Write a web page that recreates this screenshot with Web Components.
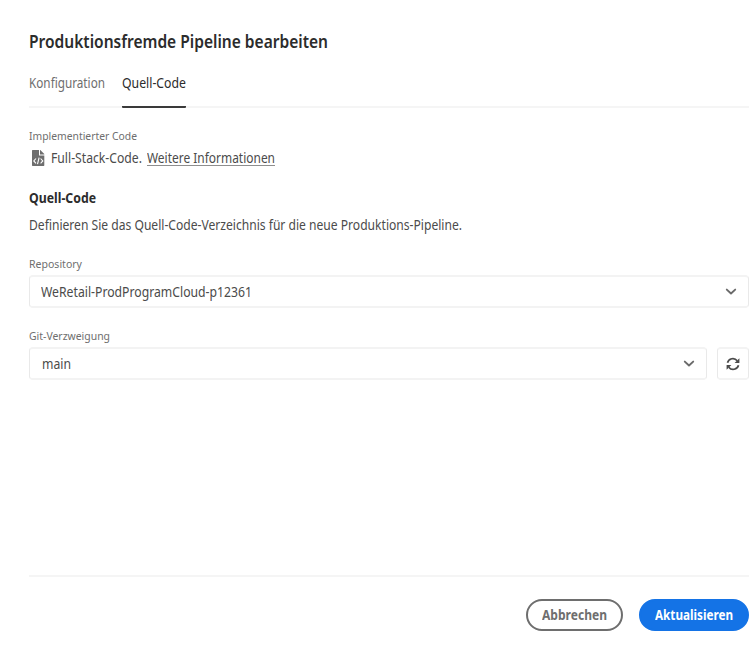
<!DOCTYPE html>
<html lang="de">
<head>
<meta charset="utf-8">
<title>Produktionsfremde Pipeline bearbeiten</title>
<style>
html,body{margin:0;height:100%;background:#fff}
body{font-family:"Noto Sans","Open Sans",sans-serif;font-size:14px;color:#4b4b4b;overflow:hidden}
</style>
</head>
<body>
<pipeline-dialog></pipeline-dialog>
<script>
class BaseElement extends HTMLElement {
  constructor(){ super(); this.attachShadow({mode:"open"}).innerHTML = this.template(); }
}

// A single line of text condensed horizontally to a given width.
customElements.define("fit-text", class extends BaseElement {
  template(){ return `<style>:host{display:block;white-space:nowrap}span{display:inline-block;transform-origin:0 50%}</style><span><slot></slot></span>`; }
  connectedCallback(){
    const w = parseFloat(this.getAttribute("w"));
    this.style.width = w + "px";
    const s = this.shadowRoot.querySelector("span");
    const natural = s.getBoundingClientRect().width;
    s.style.transform = "scaleX(" + (w / natural) + ")";
  }
});

customElements.define("tab-item", class extends BaseElement {
  template(){ return `<style>:host{display:block;box-sizing:border-box;height:39px;line-height:28px;color:#6e6e6e;border-bottom:2px solid transparent}
  :host([selected]){color:#2c2c2c;border-color:#3a3a3a;border-radius:1px}</style><slot></slot>`; }
});
customElements.define("tab-bar", class extends BaseElement {
  template(){ return `<style>:host{display:flex;gap:17px;height:39px;box-shadow:inset 0 -2px #f5f5f5}</style><slot></slot>`; }
});
customElements.define("chevron-icon", class extends BaseElement {
  template(){ return `<style>:host{display:block;width:12px;height:8px}svg{display:block}</style>
  <svg width="12" height="8" viewBox="0 0 12 8" fill="none" stroke="#6a6a6a" stroke-width="1.900" stroke-linecap="round" stroke-linejoin="round"><path d="M1.800 1.600l4.200 3.900 4.200-3.900"/></svg>`; }
});
customElements.define("code-file-icon", class extends BaseElement {
  template(){ return `<style>:host{display:block;width:13px;height:17px}svg{display:block}</style>
  <svg width="13" height="17" viewBox="0 0 13 17"><path fill="#6e6e6e" d="M.5 0H7V5.500h5.300v9.800a.6.6 0 0 1-.6.6H.6a.6.6 0 0 1-.6-.6V.5zM8 0h.3L12.300 4.100V4.500H8z"/>
  <path fill="none" stroke="#fff" stroke-width="1.100" d="M4 8.500L1.800 10.900l2.200 2.400M8.600 8.500L10.800 10.900l-2.200 2.400M7.100 7.700L5.500 14.100"/></svg>`; }
});
customElements.define("refresh-icon", class extends BaseElement {
  template(){ return `<style>:host{display:block;width:14px;height:14px}svg{display:block}</style>
  <svg width="14" height="14" viewBox="0 0 14 14"><path d="M1.500 5.800A5.500 5.500 0 0 1 11.200 3.800M12.500 8.200A5.500 5.500 0 0 1 2.800 10.200" fill="none" stroke="#4b4b4b" stroke-width="1.700"/>
  <path d="M13.400 1.200V6H8.600zM.6 12.800V8h4.800z" fill="#4b4b4b"/></svg>`; }
});
customElements.define("field-label", class extends BaseElement {
  template(){ return `<style>:host{display:block;height:16px;line-height:16px;font-size:11.5px;color:#6e6e6e}</style><slot></slot>`; }
});
customElements.define("select-box", class extends BaseElement {
  template(){ return `<style>:host{display:flex;align-items:center;justify-content:space-between;flex:1;box-sizing:border-box;height:33px;padding:0 11px;border:solid #f3f3f3;border-width:2px 1px;border-left-color:#e9e9e9;border-right-color:#e9e9e9;border-radius:4px;color:#4b4b4b}</style><slot></slot><chevron-icon></chevron-icon>`; }
});
customElements.define("icon-button", class extends BaseElement {
  template(){ return `<style>:host{display:flex;align-items:center;justify-content:center;box-sizing:border-box;width:32px;height:33px;border:solid #f3f3f3;border-width:2px 1px;border-left-color:#e9e9e9;border-right-color:#e9e9e9;border-radius:4px}</style><slot></slot>`; }
});
customElements.define("pill-button", class extends BaseElement {
  template(){ return `<style>:host{display:flex;align-items:center;justify-content:center;box-sizing:border-box;height:32px;width:97px;padding-bottom:1px;border:2px solid #6e6e6e;border-radius:16px;color:#6e6e6e;font-weight:700}
  :host([primary]){width:110px;background:#1473e6;border-color:#1473e6;color:#fff}</style><slot></slot>`; }
});
customElements.define("pipeline-dialog", class extends BaseElement {
  template(){ return `<style>
  :host{display:flex;flex-direction:column;box-sizing:border-box;height:659px;padding:29px 7px 28px 29px}
  h1{margin:0 0 16px;height:24px;line-height:26px;font-size:17px;font-weight:600;color:#2c2c2c}
  h2{margin:20px 0 7px;height:20px;line-height:20px;font-size:13.5px;font-weight:700;color:#2c2c2c}
  p{margin:0 0 21px;height:20px;line-height:20px}
  .label{margin-top:20px}
  .code{display:flex;align-items:center;height:20px;line-height:20px;margin-top:4px}
  code-file-icon{margin:0 6px 0 3px}
  a{display:block;margin-left:5px;height:16px;line-height:16px;box-sizing:border-box;border-bottom:1px solid #8e8e8e;color:#4b4b4b}
  .row{display:flex;gap:10px;margin-top:3px}
  .second{margin-top:20px}
  .second + .row fit-text{margin-left:1px}
  footer{display:flex;justify-content:flex-end;gap:16px;margin-top:auto;border-top:2px solid #f5f5f5;padding-top:22px}
  </style>
  <h1><fit-text w="299">Produktionsfremde Pipeline bearbeiten</fit-text></h1>
  <tab-bar><tab-item><fit-text w="76">Konfiguration</fit-text></tab-item><tab-item selected><fit-text w="64">Quell-Code</fit-text></tab-item></tab-bar>
  <field-label class="label"><fit-text w="108">Implementierter Code</fit-text></field-label>
  <div class="code"><code-file-icon></code-file-icon><fit-text w="91">Full-Stack-Code.</fit-text><a><fit-text w="128">Weitere Informationen</fit-text></a></div>
  <h2><fit-text w="67">Quell-Code</fit-text></h2>
  <p><fit-text w="433">Definieren Sie das Quell-Code-Verzeichnis für die neue Produktions-Pipeline.</fit-text></p>
  <field-label><fit-text w="53">Repository</fit-text></field-label>
  <div class="row"><select-box><fit-text w="211">WeRetail-ProdProgramCloud-p12361</fit-text></select-box></div>
  <field-label class="second"><fit-text w="81">Git-Verzweigung</fit-text></field-label>
  <div class="row"><select-box><fit-text w="29">main</fit-text></select-box><icon-button><refresh-icon></refresh-icon></icon-button></div>
  <footer><pill-button><fit-text w="65">Abbrechen</fit-text></pill-button><pill-button primary><fit-text w="78">Aktualisieren</fit-text></pill-button></footer>`; }
});
</script>
</body>
</html>
